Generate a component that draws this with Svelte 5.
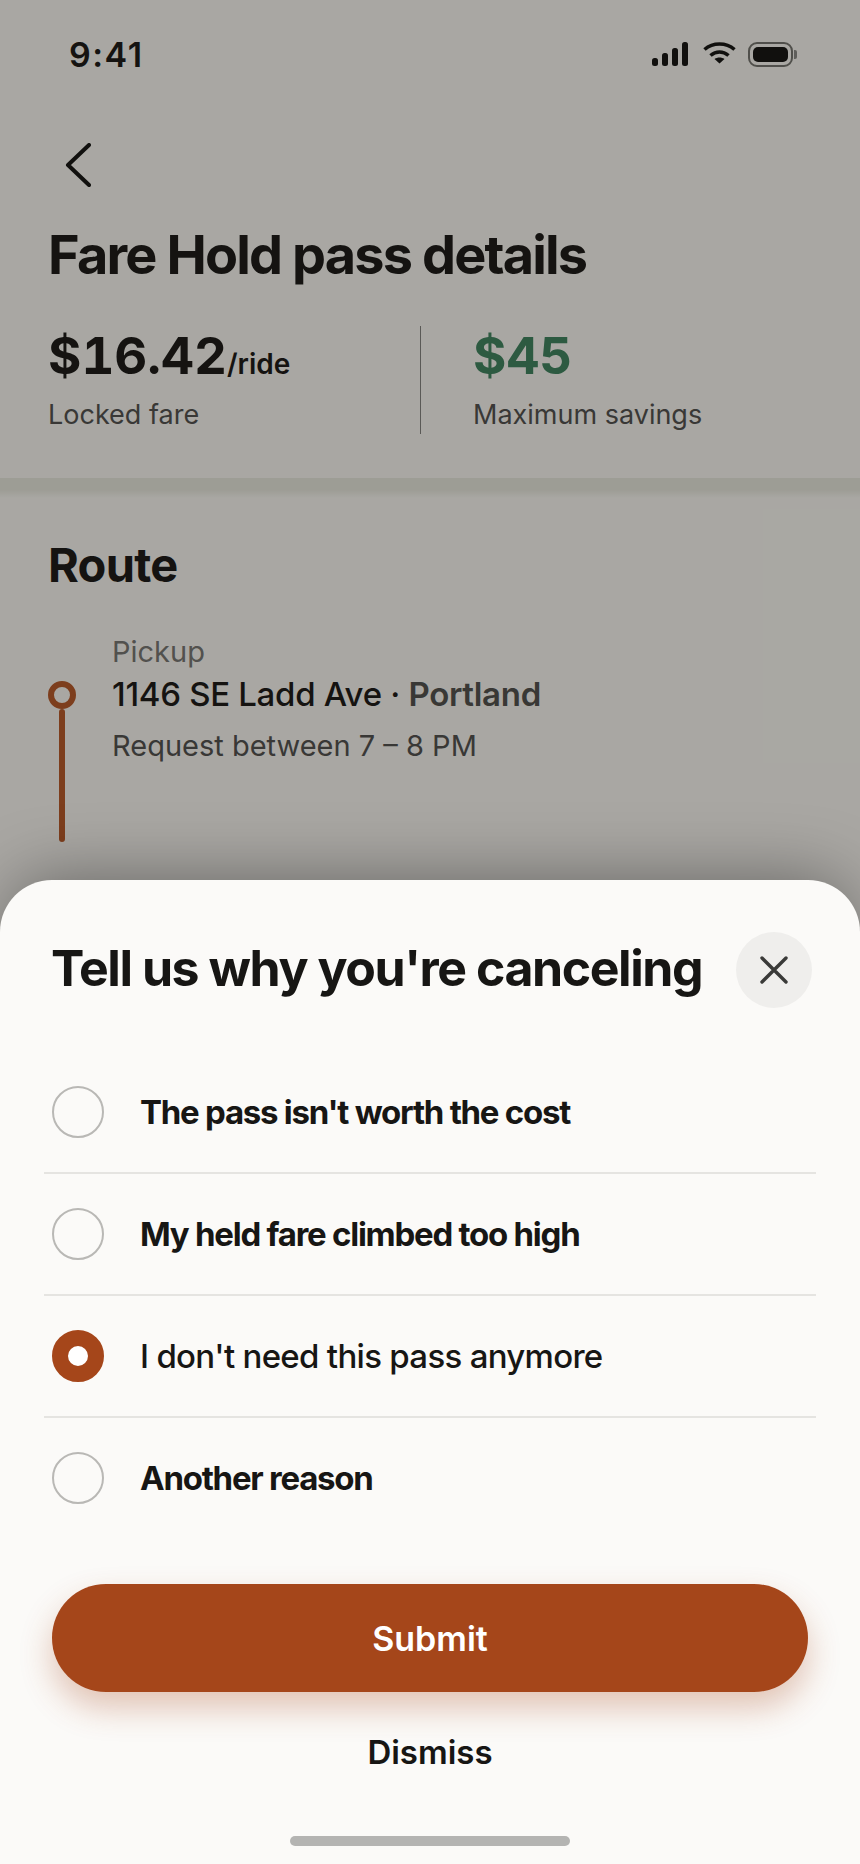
<script>
  const reasons = [
    { label: "The pass isn't worth the cost" },
    { label: 'My held fare climbed too high' },
    { label: "I don't need this pass anymore", selected: true },
    { label: 'Another reason' }
  ];
</script>

<div class="screen">
  <div class="page">
    <div class="status">
      <span class="time">9:41</span>
      <div class="status-icons">
        <svg width="36" height="24" viewBox="0 0 36 24" fill="#1a1916">
          <rect x="0" y="16" width="6" height="8" rx="2.5" />
          <rect x="10" y="11" width="6" height="13" rx="2.5" />
          <rect x="20" y="6" width="6" height="18" rx="2.5" />
          <rect x="30" y="0" width="6" height="24" rx="2.5" />
        </svg>
        <svg class="wifi" width="33" height="22" viewBox="0 0 33 22" fill="none" stroke="#1a1916" stroke-width="3.6">
          <path d="M1.5 7.5C10 .2 23 .2 31.5 7.5" />
          <path d="M7.5 13.5C13 8.8 20 8.8 25.5 13.5" />
          <path d="M16.5 21.5L11.5 17C14.5 15 18.5 15 21.5 17Z" fill="#1a1916" stroke="none" />
        </svg>
        <div class="battery">
          <div class="battery-body"><div class="battery-fill"></div></div>
          <div class="battery-nub"></div>
        </div>
      </div>
    </div>

    <svg class="back" width="26" height="44" viewBox="0 0 26 44" fill="none" stroke="#1a1916" stroke-width="4" stroke-linecap="round" stroke-linejoin="round">
      <path d="M24 2L3 22L24 42" />
    </svg>

    <h1>Fare Hold pass details</h1>

    <div class="stats">
      <div class="stat">
        <div class="amount">$16.42<span class="unit">/ride</span></div>
        <div class="stat-label">Locked fare</div>
      </div>
      <div class="stat second">
        <div class="amount green">$45</div>
        <div class="stat-label">Maximum savings</div>
      </div>
    </div>

    <div class="band"></div>

    <section class="route">
      <h2>Route</h2>
      <div class="stop">
        <div class="track">
          <div class="dot"></div>
          <div class="line"></div>
        </div>
        <div class="stop-text">
          <div class="stop-kind">Pickup</div>
          <div class="address">1146 SE Ladd Ave · <span class="city">Portland</span></div>
          <div class="window">Request between 7 – 8 PM</div>
        </div>
      </div>
    </section>
  </div>

  <div class="scrim"></div>

  <div class="sheet">
    <div class="sheet-head">
      <h3>Tell us why you're canceling</h3>
      <button class="close" aria-label="Close">
        <svg width="32" height="32" viewBox="0 0 32 32" fill="none" stroke="#3a3a38" stroke-width="3.4" stroke-linecap="round">
          <path d="M4 4L28 28M28 4L4 28" />
        </svg>
      </button>
    </div>

    <div class="reasons">
      {#each reasons as reason}
        <div class="reason">
          <span class="radio" class:on={reason.selected}></span>
          <span class="reason-label" class:picked={reason.selected}>{reason.label}</span>
        </div>
      {/each}
    </div>

    <button class="submit">Submit</button>
    <button class="dismiss">Dismiss</button>
    <div class="home"></div>
  </div>
</div>

<style>
  :global(body) {
    margin: 0;
  }

  .screen {
    position: relative;
    width: 860px;
    height: 1864px;
    overflow: hidden;
    font-family: Inter, "Liberation Sans", sans-serif;
    color: #1f1d1a;
  }

  .page {
    height: 100%;
    background: #f9f7f0;
  }

  .scrim {
    position: absolute;
    inset: 0;
    background: rgba(0, 0, 0, 0.32);
  }

  .status {
    display: flex;
    justify-content: space-between;
    align-items: center;
    padding: 36px 63px 0 69px;
    height: 36px;
  }

  .time {
    font-size: 34px;
    font-weight: 600;
    letter-spacing: 1.5px;
  }

  .status-icons {
    display: flex;
    align-items: center;
    gap: 15px;
  }

  .wifi {
    margin-top: -2px;
  }

  .battery {
    display: flex;
    align-items: center;
    gap: 1px;
    margin-left: -3px;
  }

  .battery-body {
    box-sizing: border-box;
    width: 45px;
    height: 25px;
    padding: 3px;
    border: 2px solid #77756f;
    border-radius: 9px;
  }

  .battery-fill {
    height: 100%;
    background: #1a1916;
    border-radius: 5px;
  }

  .battery-nub {
    width: 3px;
    height: 9px;
    background: #8d8b86;
    border-radius: 0 2px 2px 0;
  }

  .back {
    display: block;
    margin: 71px 0 0 65px;
  }

  h1 {
    margin: 38px 0 0 48px;
    font-size: 54px;
    line-height: 60px;
    font-weight: 700;
    letter-spacing: -1.86px;
  }

  .stats {
    display: flex;
    margin: 41px 0 0 48px;
  }

  .stat {
    width: 372px;
    height: 108px;
  }

  .stat.second {
    border-left: 1px solid #85847f;
    padding-left: 52px;
  }

  .amount {
    font-size: 51px;
    line-height: 60px;
    font-weight: 700;
    font-variant-numeric: tabular-nums;
  }

  .green {
    color: #438561;
  }

  .unit {
    font-size: 28px;
    line-height: 1;
    font-weight: 600;
  }

  .stat-label {
    margin-top: 11px;
    font-size: 27px;
    line-height: 36px;
    color: #555350;
  }

  .band {
    height: 20px;
    margin-top: 44px;
    background: linear-gradient(#e8e7dc 60%, #f9f7f0);
  }

  .route {
    padding: 41px 48px 0;
  }

  h2 {
    margin: 0;
    font-size: 47px;
    line-height: 52px;
    font-weight: 700;
    letter-spacing: -0.7px;
  }

  .stop {
    display: flex;
    margin-top: 43px;
    gap: 36px;
  }

  .track {
    display: flex;
    flex-direction: column;
    align-items: center;
    width: 28px;
    padding-top: 47px;
  }

  .dot {
    width: 28px;
    height: 28px;
    box-sizing: border-box;
    border: 6px solid #b85c2c;
    border-radius: 50%;
  }

  .line {
    width: 6px;
    height: 133px;
    background: #b85c2c;
    border-radius: 3px;
  }

  .stop-kind {
    font-size: 29px;
    line-height: 36px;
    color: #7a7873;
  }

  .address {
    margin-top: 5px;
    font-size: 33px;
    line-height: 38px;
    font-weight: 500;
    letter-spacing: -0.3px;
  }

  .city {
    font-weight: 600;
    color: #55534f;
  }

  .window {
    margin-top: 15px;
    font-size: 29px;
    line-height: 36px;
    color: #555350;
  }

  .sheet {
    position: absolute;
    left: 0;
    right: 0;
    top: 880px;
    bottom: 0;
    display: flex;
    flex-direction: column;
    align-items: center;
    background: #fbfaf8;
    border-radius: 52px 52px 0 0;
    box-shadow: 0 -10px 70px -10px rgba(0, 0, 0, 0.4);
    color: #171614;
  }

  .sheet-head {
    align-self: stretch;
    display: flex;
    justify-content: space-between;
    align-items: center;
    padding: 52px 48px 0 51px;
  }

  h3 {
    margin: 0 0 4px;
    font-size: 50px;
    line-height: 72px;
    font-weight: 700;
    letter-spacing: -1.45px;
  }

  .close {
    display: flex;
    align-items: center;
    justify-content: center;
    width: 76px;
    height: 76px;
    padding: 0;
    border: none;
    border-radius: 50%;
    background: #efeeec;
  }

  .reasons {
    align-self: stretch;
    margin: 44px 44px 0;
  }

  .reason {
    display: flex;
    align-items: center;
    gap: 36px;
    height: 120px;
    padding-left: 8px;
    border-bottom: 2px solid #e5e4e1;
  }

  .reason:last-child {
    border-bottom: none;
  }

  .radio {
    box-sizing: border-box;
    width: 52px;
    height: 52px;
    border: 2px solid #b9b8b5;
    border-radius: 50%;
  }

  .radio.on {
    border: 16px solid #a5461a;
    background: #fff;
  }

  .reason-label {
    font-size: 33px;
    font-weight: 700;
    letter-spacing: -1.25px;
  }

  .reason-label.picked {
    font-weight: 500;
    letter-spacing: -0.7px;
  }

  .submit {
    width: 756px;
    height: 108px;
    margin-top: 46px;
    border: none;
    border-radius: 54px;
    background: #a5461a;
    color: #fff;
    font-family: inherit;
    font-size: 34px;
    font-weight: 600;
    box-shadow: 0 16px 32px rgba(165, 70, 26, 0.3);
  }

  .dismiss {
    margin-top: 38px;
    padding: 0;
    border: none;
    background: none;
    color: #171614;
    font-family: inherit;
    font-size: 33px;
    line-height: 44px;
    font-weight: 600;
  }

  .home {
    width: 280px;
    height: 10px;
    margin-top: 62px;
    border-radius: 5px;
    background: #b4b4b2;
  }
</style>
